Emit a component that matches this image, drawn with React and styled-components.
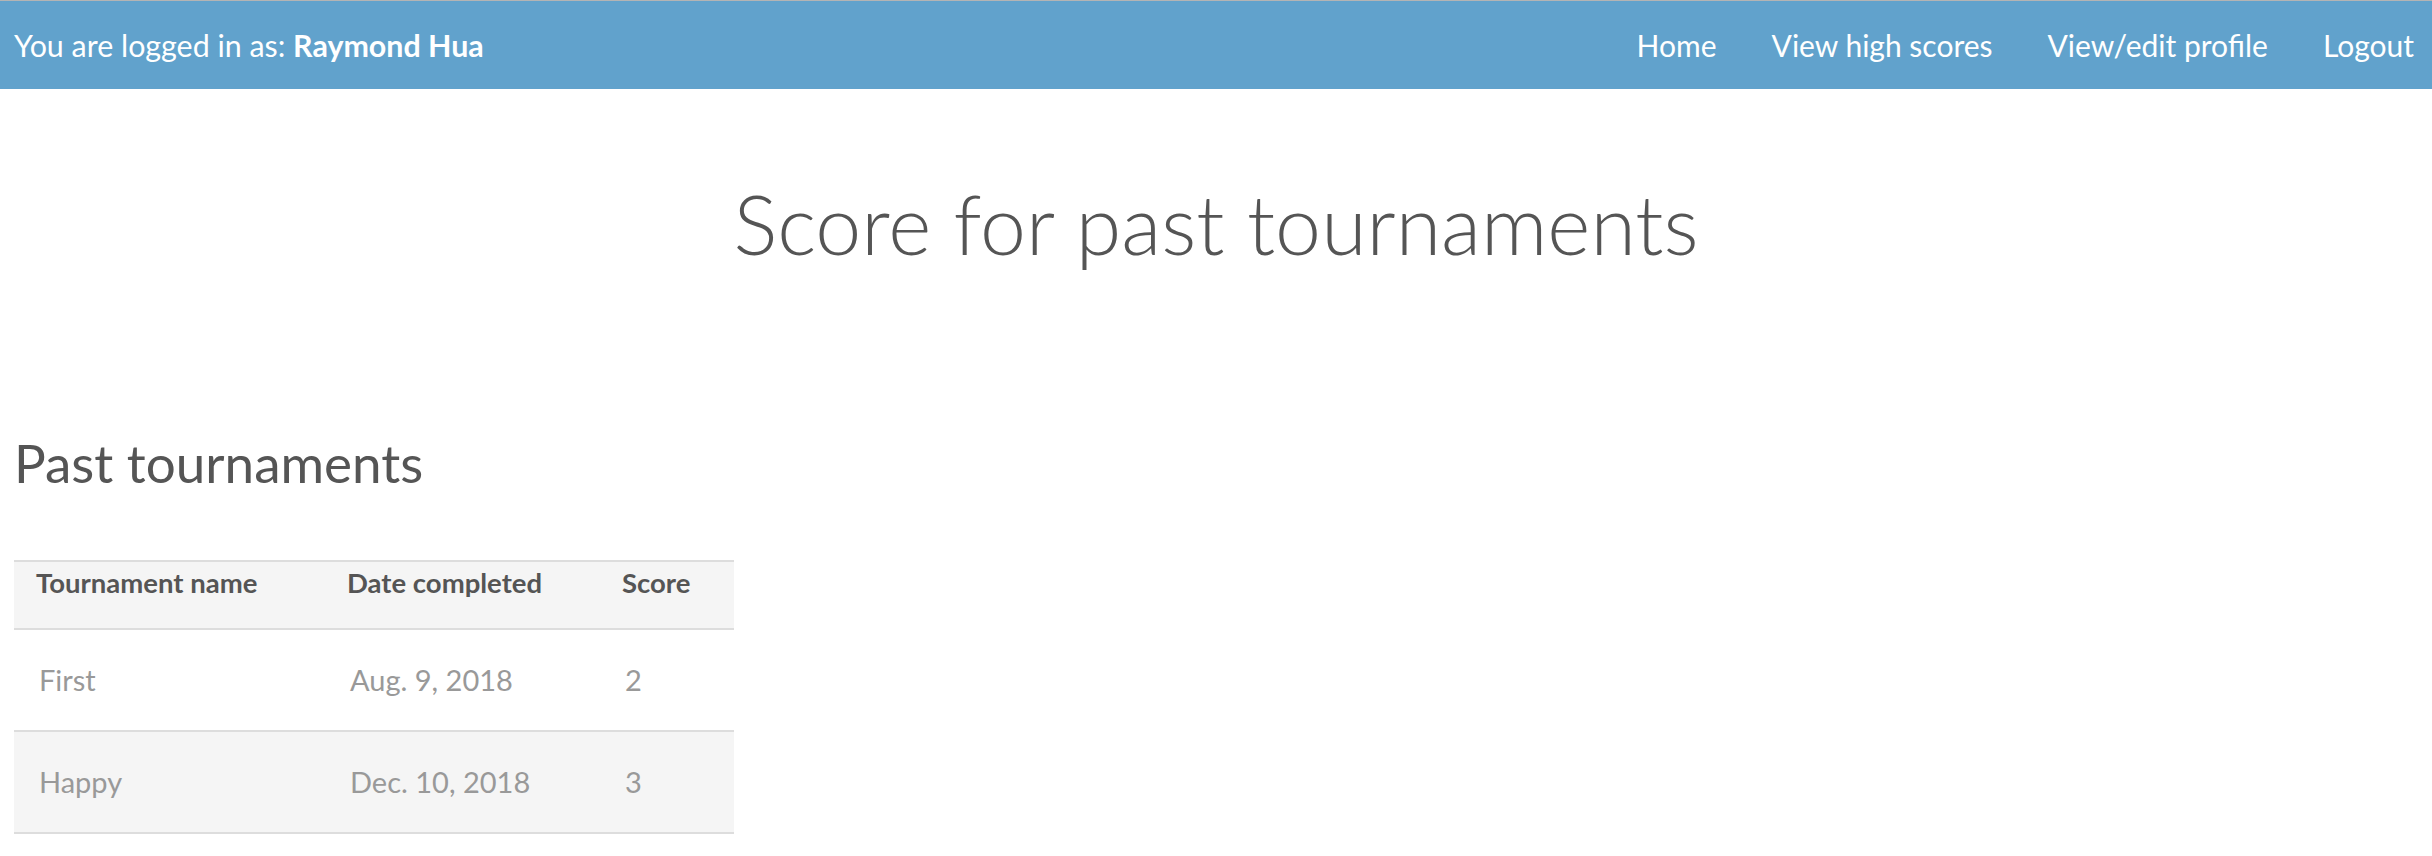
import React from "react";
import styled, { createGlobalStyle } from "styled-components";

const GlobalStyle = createGlobalStyle`
  html, body {
    margin: 0;
    padding: 0;
    background: #ffffff;
  }
  body {
    font-family: Lato, "Liberation Sans", sans-serif;
    color: #555555;
  }
`;

const NavBar = styled.header`
  border-top: 1px solid #b4b4b4;
  background: #61a2cc;
  height: 88px;
  display: flex;
  align-items: center;
  justify-content: space-between;
  padding: 0 18px 0 14px;
  color: #ffffff;
  font-size: 30px;
  line-height: 36px;
`;

const Welcome = styled.div`
  white-space: nowrap;
  font-size: 30.4px;
`;

const UserName = styled.strong`
  font-weight: 700;
`;

const NavLinks = styled.nav`
  display: flex;
  gap: 55px;
`;

const NavLink = styled.a`
  color: #ffffff;
  text-decoration: none;
  white-space: nowrap;
`;

const Main = styled.main`
  padding: 0 14px;
`;

const Title = styled.h1`
  margin: 86px 0 0;
  text-align: center;
  font-weight: 300;
  font-size: 82.5px;
  line-height: 97px;
  color: #555555;
`;

const SectionTitle = styled.h2`
  margin: 160px 0 0;
  font-weight: 400;
  font-size: 53px;
  line-height: 61px;
  color: #555555;
`;

const Table = styled.table`
  margin-top: 67px;
  width: 720px;
  border-collapse: separate;
  border-spacing: 0;
  table-layout: fixed;
`;

const Th = styled.th`
  width: ${(p) => p.$width}px;
  box-sizing: border-box;
  border-top: 2px solid #dddddd;
  border-bottom: 2px solid #dddddd;
  background: #f5f5f5;
  text-align: left;
  vertical-align: top;
  padding: 5px 0 30px 22px;
  font-size: 27.5px;
  line-height: 31px;
  font-weight: 700;
  color: #555555;
`;

const Row = styled.tr`
  background: ${(p) => (p.$striped ? "#f5f5f5" : "#ffffff")};
`;

const Td = styled.td`
  border-bottom: 2px solid #dddddd;
  height: 100px;
  padding: 0 0 0 25px;
  vertical-align: middle;
  font-size: 29px;
  line-height: 36px;
  color: #999999;
`;

const columns = [
  { label: "Tournament name", width: 311 },
  { label: "Date completed", width: 275 },
  { label: "Score", width: 134 },
];

const rows = [
  { name: "First", date: "Aug. 9, 2018", score: 2 },
  { name: "Happy", date: "Dec. 10, 2018", score: 3 },
];

export default function App() {
  return (
    <>
      <GlobalStyle />
      <NavBar>
        <Welcome>
          You are logged in as: <UserName>Raymond Hua</UserName>
        </Welcome>
        <NavLinks>
          <NavLink href="#">Home</NavLink>
          <NavLink href="#">View high scores</NavLink>
          <NavLink href="#">View/edit profile</NavLink>
          <NavLink href="#">Logout</NavLink>
        </NavLinks>
      </NavBar>
      <Main>
        <Title>Score for past tournaments</Title>
        <SectionTitle>Past tournaments</SectionTitle>
        <Table>
          <thead>
            <tr>
              {columns.map((c) => (
                <Th key={c.label} $width={c.width}>
                  {c.label}
                </Th>
              ))}
            </tr>
          </thead>
          <tbody>
            {rows.map((r, i) => (
              <Row key={r.name} $striped={i % 2 === 1}>
                <Td>{r.name}</Td>
                <Td>{r.date}</Td>
                <Td>{r.score}</Td>
              </Row>
            ))}
          </tbody>
        </Table>
      </Main>
    </>
  );
}
